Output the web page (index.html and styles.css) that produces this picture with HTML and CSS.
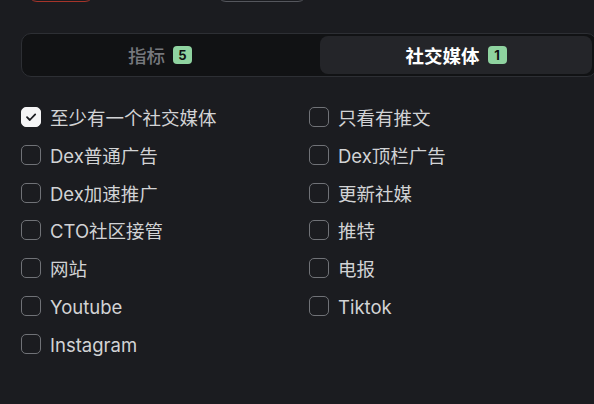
FILE: index.html
```html
<!DOCTYPE html>
<html lang="zh-CN">
<head>
<meta charset="utf-8">
<link rel="stylesheet" href="styles.css">
</head>
<body>
<div class="page">
  <div class="top-actions">
    <button class="btn btn-red"></button>
    <button class="btn btn-gray"></button>
  </div>

  <div class="tabs">
    <div class="tab">指标 <span class="badge">5</span></div>
    <div class="tab active">社交媒体 <span class="badge">1</span></div>
  </div>

  <div class="options">
    <label class="opt"><span class="box checked"><svg viewBox="0 0 20 20" width="20" height="20"><path d="M6 10.2 L8.8 13 L14.2 7.4" fill="none" stroke="#1b1c20" stroke-width="1.8" stroke-linecap="round" stroke-linejoin="round"/></svg></span><span class="lbl">至少有一个社交媒体</span></label>
    <label class="opt"><span class="box"></span><span class="lbl">只看有推文</span></label>
    <label class="opt"><span class="box"></span><span class="lbl">Dex普通广告</span></label>
    <label class="opt"><span class="box"></span><span class="lbl">Dex顶栏广告</span></label>
    <label class="opt"><span class="box"></span><span class="lbl">Dex加速推广</span></label>
    <label class="opt"><span class="box"></span><span class="lbl">更新社媒</span></label>
    <label class="opt"><span class="box"></span><span class="lbl">CTO社区接管</span></label>
    <label class="opt"><span class="box"></span><span class="lbl">推特</span></label>
    <label class="opt"><span class="box"></span><span class="lbl">网站</span></label>
    <label class="opt"><span class="box"></span><span class="lbl">电报</span></label>
    <label class="opt"><span class="box"></span><span class="lbl">Youtube</span></label>
    <label class="opt"><span class="box"></span><span class="lbl">Tiktok</span></label>
    <label class="opt"><span class="box"></span><span class="lbl">Instagram</span></label>
  </div>
</div>
</body>
</html>
```

FILE: styles.css
```css
html, body {
  margin: 0;
  padding: 0;
  background: #1b1c20;
  overflow: hidden;
}
body {
  font-family: Inter, "Noto Sans CJK SC", sans-serif;
  color: #cfd0d3;
}
.page {
  width: 594px;
  height: 404px;
}
.top-actions {
  display: flex;
  margin-top: -30px;
  padding-left: 28px;
  gap: 123px;
}
.btn {
  height: 32px;
  border-radius: 9px;
  background: transparent;
  padding: 0;
}
.btn-red {
  width: 66px;
  border: 1px solid #a6342a;
}
.btn-gray {
  width: 90px;
  border: 1px solid #55575d;
}
.tabs {
  margin-top: 31px;
  margin-left: 21px;
  box-sizing: border-box;
  width: 576px;
  border: 1px solid #2d2f34;
  border-radius: 10px;
  background: #111214;
  padding: 2px;
  display: grid;
  grid-template-columns: 272px 272px;
  column-gap: 24px;
}
.tab {
  height: 38px;
  display: flex;
  align-items: center;
  justify-content: center;
  gap: 8px;
  font-size: 18.5px;
  font-weight: 500;
  color: #76787d;
  border-radius: 8px;
}
.tab.active {
  background: #242529;
  color: #ffffff;
  font-weight: 700;
}
.badge {
  display: inline-flex;
  align-items: center;
  justify-content: center;
  min-width: 19px;
  height: 18px;
  padding: 0 2px;
  box-sizing: border-box;
  border-radius: 4px;
  background: #8fd3a0;
  color: #0f1012;
  font-size: 13px;
  font-weight: 700;
}
.options {
  margin-top: 28px;
  margin-left: 21px;
  display: grid;
  grid-template-columns: 288px 260px;
  row-gap: 13.8px;
}
.opt {
  display: flex;
  align-items: center;
  height: 24px;
  gap: 9px;
}
.box {
  width: 20px;
  height: 20px;
  box-sizing: border-box;
  border: 1px solid #707277;
  border-radius: 5px;
  flex: none;
  display: flex;
}
.box.checked {
  background: #f5f5f6;
  border-color: #f5f5f6;
  align-items: center;
  justify-content: center;
}
.box.checked svg {
  margin: -1px;
}
.lbl {
  font-size: 18.5px;
  line-height: 24px;
  color: #d2d3d5;
  position: relative;
  top: 1px;
}
```
